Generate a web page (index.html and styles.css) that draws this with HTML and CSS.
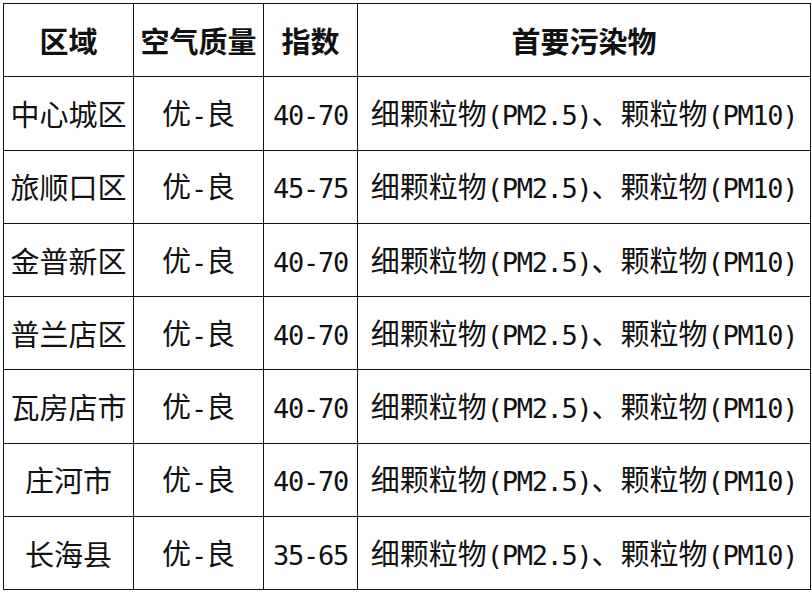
FILE: index.html
```html
<!DOCTYPE html>
<html lang="zh">
<head>
<meta charset="utf-8">
<title>空气质量</title>
<link rel="stylesheet" href="styles.css">
</head>
<body>
<div class="wrap">
<table class="aq">
  <colgroup>
    <col class="c1"><col class="c2"><col class="c3"><col class="c4">
  </colgroup>
  <thead>
    <tr><th>区域</th><th>空气质量</th><th>指数</th><th>首要污染物</th></tr>
  </thead>
  <tbody>
    <tr><td>中心城区</td><td>优<span class="lat">-</span>良</td><td><span class="lat">40-70</span></td><td>细颗粒物<span class="lat">(PM2.5)</span>、颗粒物<span class="lat">(PM10)</span></td></tr>
    <tr><td>旅顺口区</td><td>优<span class="lat">-</span>良</td><td><span class="lat">45-75</span></td><td>细颗粒物<span class="lat">(PM2.5)</span>、颗粒物<span class="lat">(PM10)</span></td></tr>
    <tr><td>金普新区</td><td>优<span class="lat">-</span>良</td><td><span class="lat">40-70</span></td><td>细颗粒物<span class="lat">(PM2.5)</span>、颗粒物<span class="lat">(PM10)</span></td></tr>
    <tr><td>普兰店区</td><td>优<span class="lat">-</span>良</td><td><span class="lat">40-70</span></td><td>细颗粒物<span class="lat">(PM2.5)</span>、颗粒物<span class="lat">(PM10)</span></td></tr>
    <tr><td>瓦房店市</td><td>优<span class="lat">-</span>良</td><td><span class="lat">40-70</span></td><td>细颗粒物<span class="lat">(PM2.5)</span>、颗粒物<span class="lat">(PM10)</span></td></tr>
    <tr><td>庄河市</td><td>优<span class="lat">-</span>良</td><td><span class="lat">40-70</span></td><td>细颗粒物<span class="lat">(PM2.5)</span>、颗粒物<span class="lat">(PM10)</span></td></tr>
    <tr><td>长海县</td><td>优<span class="lat">-</span>良</td><td><span class="lat">35-65</span></td><td>细颗粒物<span class="lat">(PM2.5)</span>、颗粒物<span class="lat">(PM10)</span></td></tr>
  </tbody>
</table>
</div>
</body>
</html>
```
FILE: styles.css
```css
html, body {
  margin: 0;
  padding: 0;
  background: #fff;
}
.wrap {
  padding: 3px 0 0 3px;
}
.aq {
  border-collapse: collapse;
  table-layout: fixed;
  width: 807px;
  font-family: "Noto Sans CJK SC", sans-serif;
  font-size: 29px;
  color: #111;
}
.aq tr {
  height: 73.3px;
}
.c1 { width: 130px; }
.c2 { width: 130px; }
.c3 { width: 94px; }
.c4 { width: 453px; }
.aq th, .aq td {
  border: 1.5px solid #111;
  text-align: center;
  vertical-align: middle;
  padding: 0;
  white-space: nowrap;
  line-height: 1;
}
.aq th {
  font-weight: 700;
}
.aq td {
  font-weight: 400;
}
.lat {
  font-family: "DejaVu Sans Mono", monospace;
  font-size: 27px;
  letter-spacing: -1.3px;
}
```
